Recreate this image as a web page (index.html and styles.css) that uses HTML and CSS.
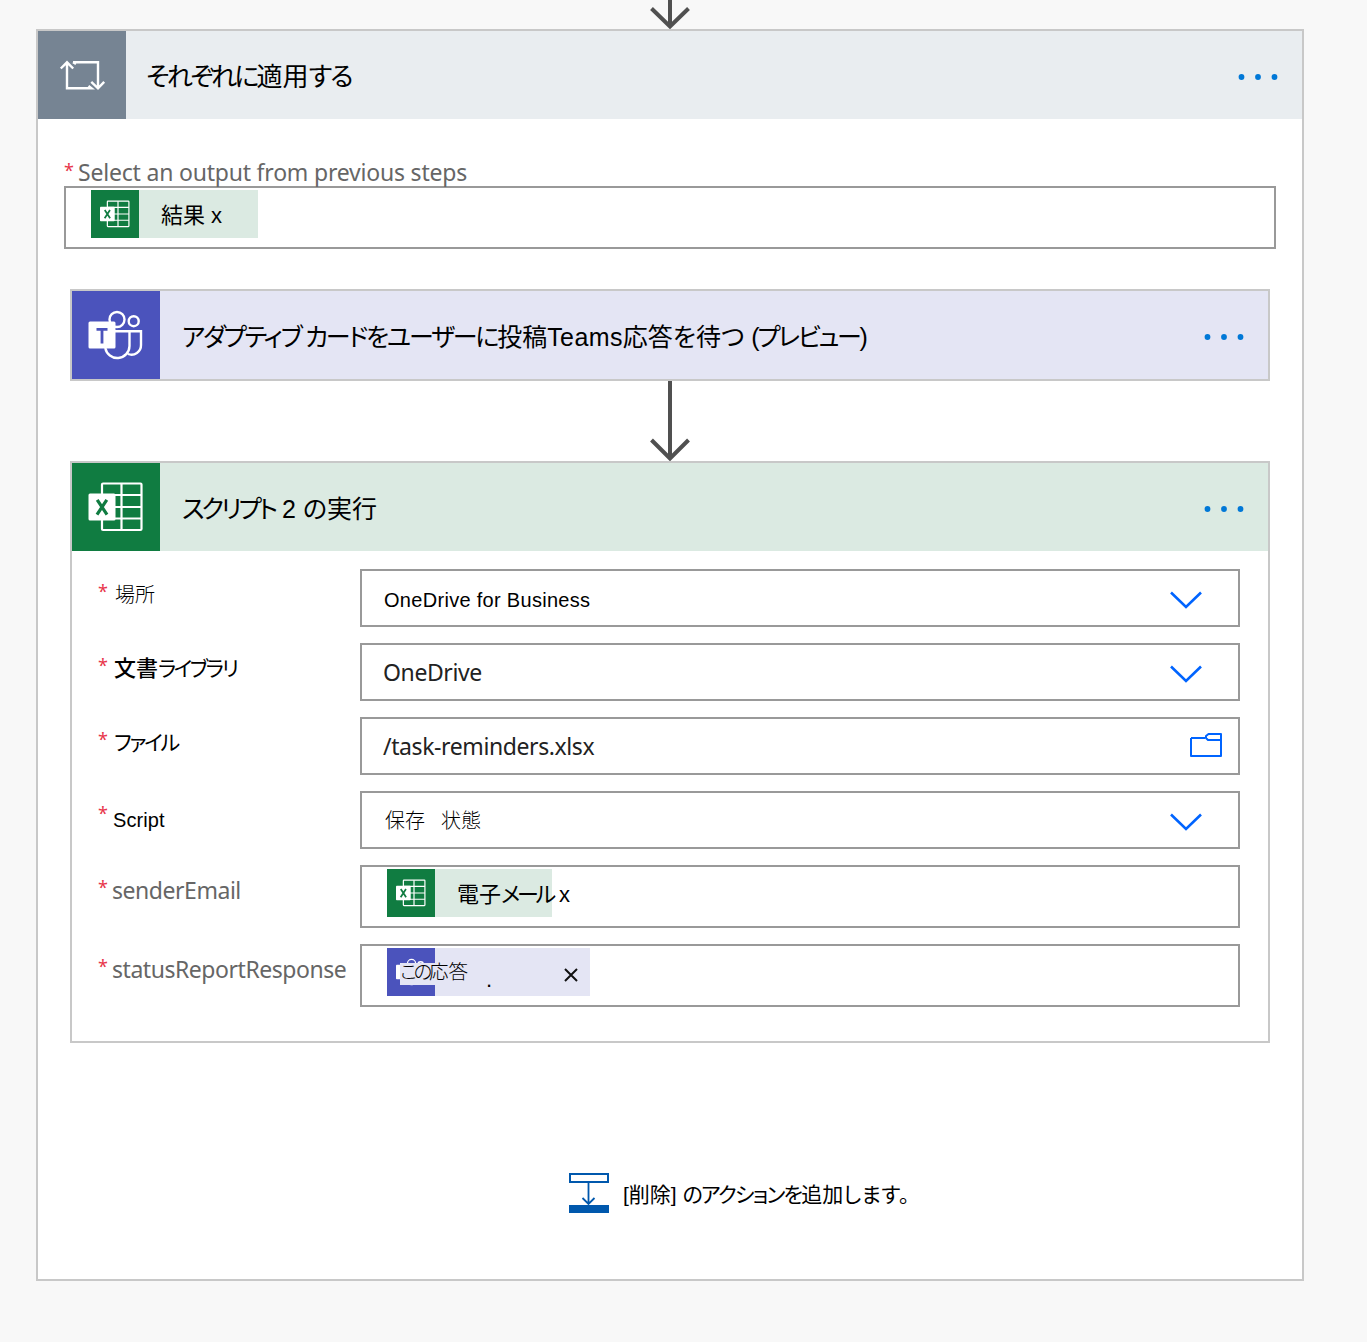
FILE: index.html
```html
<!DOCTYPE html>
<html lang="ja">
<head>
<meta charset="utf-8">
<title>それぞれに適用する</title>
<link rel="stylesheet" href="styles.css">
</head>
<body>
<svg class="defs" width="0" height="0">
  <symbol id="excel" viewBox="0 0 88 88">
    <g fill="none" stroke="#fff" stroke-width="2.200"><rect x="30" y="20.500" width="39.500" height="46.500" rx="1"/><path d="M49.500 20.500v46.500M30 32h39.500M30 44h39.500M30 55.500h39.500"/></g>
    <rect x="16.500" y="30.500" width="27" height="27" rx="1.500" fill="#fff"/>
    <path d="M25.200 36.800l9.800 14.800M34.800 36.800l-9.800 14.800" stroke="#107c41" stroke-width="3.200" fill="none"/>
  </symbol>
  <symbol id="teams" viewBox="0 0 88 88">
    <g fill="none" stroke="#fff" stroke-width="2.400"><circle cx="45" cy="28.500" r="7.500"/><circle cx="61.700" cy="30.200" r="5"/><path d="M43 40.200h14.500V55a12.200 12.200 0 0 1-24.200 2M57.500 40.200h11.500V54a9.500 9.500 0 0 1-13 9"/></g>
    <rect x="16.500" y="30.500" width="27" height="27" rx="1.500" fill="#fff"/>
    <path d="M24.500 38.300h11M30 38v14.500" stroke="#4b53bc" stroke-width="2.800" fill="none"/>
  </symbol>
  <symbol id="dots" viewBox="0 0 40 8"><g fill="#0078d7"><circle cx="3.500" cy="4" r="2.900"/><circle cx="20" cy="4" r="2.900"/><circle cx="36.500" cy="4" r="2.900"/></g></symbol>
  <symbol id="chevron" viewBox="0 0 32 18"><path d="M1 1.500L16 16L31 1.500" fill="none" stroke="#0064ff" stroke-width="2.600"/></symbol>
</svg>
<main class="flow">
  <svg class="arrow-in" width="40" height="29" viewBox="0 0 40 29"><path d="M20 0v26M1.500 8.500L20 26.500L38.500 8.500" fill="none" stroke="#505050" stroke-width="4"/></svg>
  <section class="card loop">
    <header class="head head-loop">
      <div class="tile tile-loop">
        <svg width="88" height="88" viewBox="0 0 88 88" fill="none" stroke="#fff" stroke-width="2.400"><path d="M29 32v25.300h24.500l-3-2.300M22.800 37.500l6.200-6.200l6.200 6.200M35 31.200h25v25M35 31.200l3 1.800M53.300 50.800l6.700 6.500l6.200-6.500"/></svg>
      </div>
      <h1 class="title t-loop"><span class="k1">それぞれに</span>適用<span class="k2">する</span></h1>
      <svg class="dots" width="40" height="8"><use href="#dots"/></svg>
    </header>
    <div class="loop-body">
      <div class="label output-label"><i class="req">*</i><span class="latin t-output">Select an output from previous steps</span></div>
      <div class="input token-input">
        <div class="token token-result"><svg class="token-icon green" width="48" height="48"><use href="#excel"/></svg><span class="token-text t-result">結果 x</span></div>
      </div>
      <div class="inner">
        <section class="card">
          <header class="head head-teams">
            <div class="tile tile-teams"><svg width="88" height="88"><use href="#teams"/></svg></div>
            <h2 class="title t-teams"><span class="k1">アダプティブ カードをユーザーに</span><span class="k2">投稿</span><span class="k3">Teams</span>応答<span class="k4">を</span>待<span class="k4">つ</span> <span class="k5">(プレビュー)</span></h2>
            <svg class="dots" width="40" height="8"><use href="#dots"/></svg>
          </header>
        </section>
        <svg class="arrow" width="40" height="80" viewBox="0 0 40 80"><path d="M20 0v77M1.500 59L20 77.500L38.500 59" fill="none" stroke="#505050" stroke-width="4"/></svg>
        <section class="card script-card">
          <header class="head head-excel">
            <div class="tile tile-excel"><svg width="88" height="88"><use href="#excel"/></svg></div>
            <h2 class="title t-script"><span class="k1">スクリプト</span> 2 <span class="k2">の</span>実行</h2>
            <svg class="dots" width="40" height="8"><use href="#dots"/></svg>
          </header>
          <div class="fields">
            <div class="row"><div class="label"><i class="req">*</i><span class="thin t-place">場所</span></div><div class="input select"><span class="t-business">OneDrive for Business</span><svg class="chev" width="32" height="18"><use href="#chevron"/></svg></div></div>
            <div class="row"><div class="label"><i class="req">*</i><span class="ja t-library"><b>文書</b>ライブラリ</span></div><div class="input select"><span class="latin dark t-onedrive">OneDrive</span><svg class="chev" width="32" height="18"><use href="#chevron"/></svg></div></div>
            <div class="row"><div class="label"><i class="req">*</i><span class="ja t-file">ファイル</span></div><div class="input select"><span class="latin dark t-path">/task-reminders.xlsx</span><svg class="folder" width="34" height="26" viewBox="0 0 34 26" fill="none" stroke="#0064ff" stroke-width="2" stroke-linejoin="round"><path d="M2 6h14M2 6v18h30V2H19.500l-2.500 2v2l2 2H32"/></svg></div></div>
            <div class="row"><div class="label"><i class="req">*</i><span class="t-scriptlabel">Script</span></div><div class="input select"><span class="thin t-state">保存<span class="gap"></span>状態</span><svg class="chev" width="32" height="18"><use href="#chevron"/></svg></div></div>
            <div class="row"><div class="label"><i class="req">*</i><span class="latin t-email">senderEmail</span></div><div class="input token-input"><div class="token token-mail"><svg class="token-icon green" width="48" height="48"><use href="#excel"/></svg><span class="token-text t-mail">電子<span class="k1">メール</span> x</span></div></div></div>
            <div class="row"><div class="label"><i class="req">*</i><span class="latin t-status">statusReportResponse</span></div><div class="input token-input"><div class="token token-reply"><svg class="token-icon violet" width="48" height="48"><use href="#teams"/></svg><span class="reply-text thin"><span class="k1">この</span>応答</span><span class="speck">.</span><svg class="close" width="14" height="14" viewBox="0 0 14 14"><path d="M1 1l12 12M13 1L1 13" stroke="#111" stroke-width="2"/></svg></div></div></div>
          </div>
        </section>
      </div>
      <div class="add">
        <svg width="40" height="40" viewBox="0 0 40 40"><path d="M1 1h38v8H1z" fill="none" stroke="#0058ad" stroke-width="2"/><path d="M19.500 10v21M13.500 25l6 6l6-6" fill="none" stroke="#0058ad" stroke-width="1.800"/><path d="M0 32h40v8H0z" fill="#0058ad"/></svg>
        <span class="t-add">[削除] <span class="k1">のアクションを</span>追加<span class="k2">します。</span></span>
      </div>
    </div>
  </section>
</main>
</body>
</html>
```
FILE: styles.css
```css
* { box-sizing: border-box; }
body { margin: 0; background: #f8f8f8; color: #000; font-family: "Liberation Sans", "Noto Sans CJK JP", sans-serif; }
svg { display: block; flex: none; }
.defs { position: absolute; }
.flow { width: 1268px; margin-left: 36px; height: 1342px; display: flex; flex-direction: column; align-items: center; }
.card { width: 100%; border: 2px solid #c8c8c8; background: #fff; }
.loop { height: 1252px; background: #fff; }
.head { height: 88px; display: flex; align-items: center; }
.head-loop { background: #e9edf0; }
.head-teams { background: #e4e5f4; }
.head-excel { background: #dbeae2; }
.tile { width: 88px; height: 88px; flex: none; }
.tile-loop { background: #768493; }
.tile-teams { background: #4b53bc; }
.tile-excel { background: #107c41; }
.title { margin: 0 auto 0 22px; padding-top: 4px; font-weight: 400; font-size: 26px; line-height: 40px; white-space: nowrap; }
.dots { margin: 4px 24px 0 0; }
.loop-body { padding: 40px 26px 0; }
.label { display: flex; white-space: nowrap; }
.req { font: 400 18px/22px "Noto Sans", sans-serif; color: #e8364a; width: 14px; }
.latin { font: 400 23px/28px "Noto Sans", sans-serif; color: #666; white-space: nowrap; }
.latin.dark { color: #222; }
.thin { font-family: "Noto Sans CJK JP", sans-serif; font-weight: 300; }
.ja { font-feature-settings: "palt"; }
.input { border: 2px solid #999; background: #fff; display: flex; }
.token-input { height: 63px; padding: 2px 0 0 25px; }
.output-label { height: 27px; }
.token { height: 48px; display: flex; align-items: center; position: relative; white-space: nowrap; }
.token-text { padding: 3px 0 0 22px; line-height: 30px; font-size: 22px; }
.green { background: #107c41; }
.violet { background: #4b53bc; }
.token-result { width: 167px; background: #dbeae2; }
.token-mail { width: 165px; background: #dbeae2; }
.token-reply { width: 203px; background: #e4e5f4; }
.inner { padding: 40px 6px 0; display: flex; flex-direction: column; align-items: center; }
.script-card { height: 582px; }
.fields { padding: 18px 28px 0 26px; display: flex; flex-direction: column; gap: 16px; }
.row { display: grid; grid-template-columns: 262px 880px; align-items: start; }
.row .label { padding-top: 11px; }
.select { height: 58px; align-items: center; padding-left: 21px; }
.chev { margin: 4px 36px 0 auto; }
.folder { margin: -3px 15px 0 auto; }
.gap { display: inline-block; width: 16px; }
.reply-text { position: absolute; left: 13px; top: 10px; height: 27px; line-height: 25px; font-size: 19.500px; background: linear-gradient(#e4e5f4, #e4e5f4) 0 5px / 35px 22px no-repeat; }
.speck { position: absolute; left: 99px; top: 20px; font-size: 22px; line-height: 24px; }
.close { position: absolute; left: 177px; top: 20px; }
.add { margin-top: 130px; padding-left: 505px; display: flex; align-items: center; gap: 14px; white-space: nowrap; }

.k1, .k2, .k3, .k4, .k5 { font-feature-settings: "palt"; }
.t-loop { margin-left: 20px; }
.t-loop .k1 { letter-spacing: -2.800px; }
.t-loop .k2 { letter-spacing: -1.800px; }
.t-teams { font-size: 25px; }
.t-teams .k1 { letter-spacing: -2.200px; }
.t-teams .k3 { letter-spacing: .4px; }
.t-teams .k5 { letter-spacing: -2.300px; }
.t-script { font-size: 25px; }
.t-script .k1 { letter-spacing: -2.900px; }
.t-business { font-size: 20px; letter-spacing: .3px; padding: 5px 0 0 1px; }
.t-place, .t-state { font-size: 20px; }
.t-state { padding: 0 0 2px 2px; }
.t-place { line-height: 27px; padding-left: 3px; }
.t-library, .t-file { font-size: 21px; line-height: 28px; padding: 1px 0 0 2px; }
.t-library { letter-spacing: -2.400px; }
.t-library b { font-size: 22px; letter-spacing: 0; font-weight: 500; }
.t-file { letter-spacing: -2.200px; }
.t-scriptlabel { font-size: 20px; line-height: 36px; padding-left: 1px; letter-spacing: .1px; }
.t-mail .k1 { letter-spacing: -3.200px; }
.reply-text .k1 { letter-spacing: -3.300px; }
.t-output { letter-spacing: -.2px; margin-top: -1px; }
.t-email, .t-status { letter-spacing: -.460px; }
.t-onedrive, .t-path { letter-spacing: -.400px; }
.t-add { font-size: 21px; }
.t-add .k1 { letter-spacing: -1.700px; }
.t-add .k2 { letter-spacing: .5px; }
```
